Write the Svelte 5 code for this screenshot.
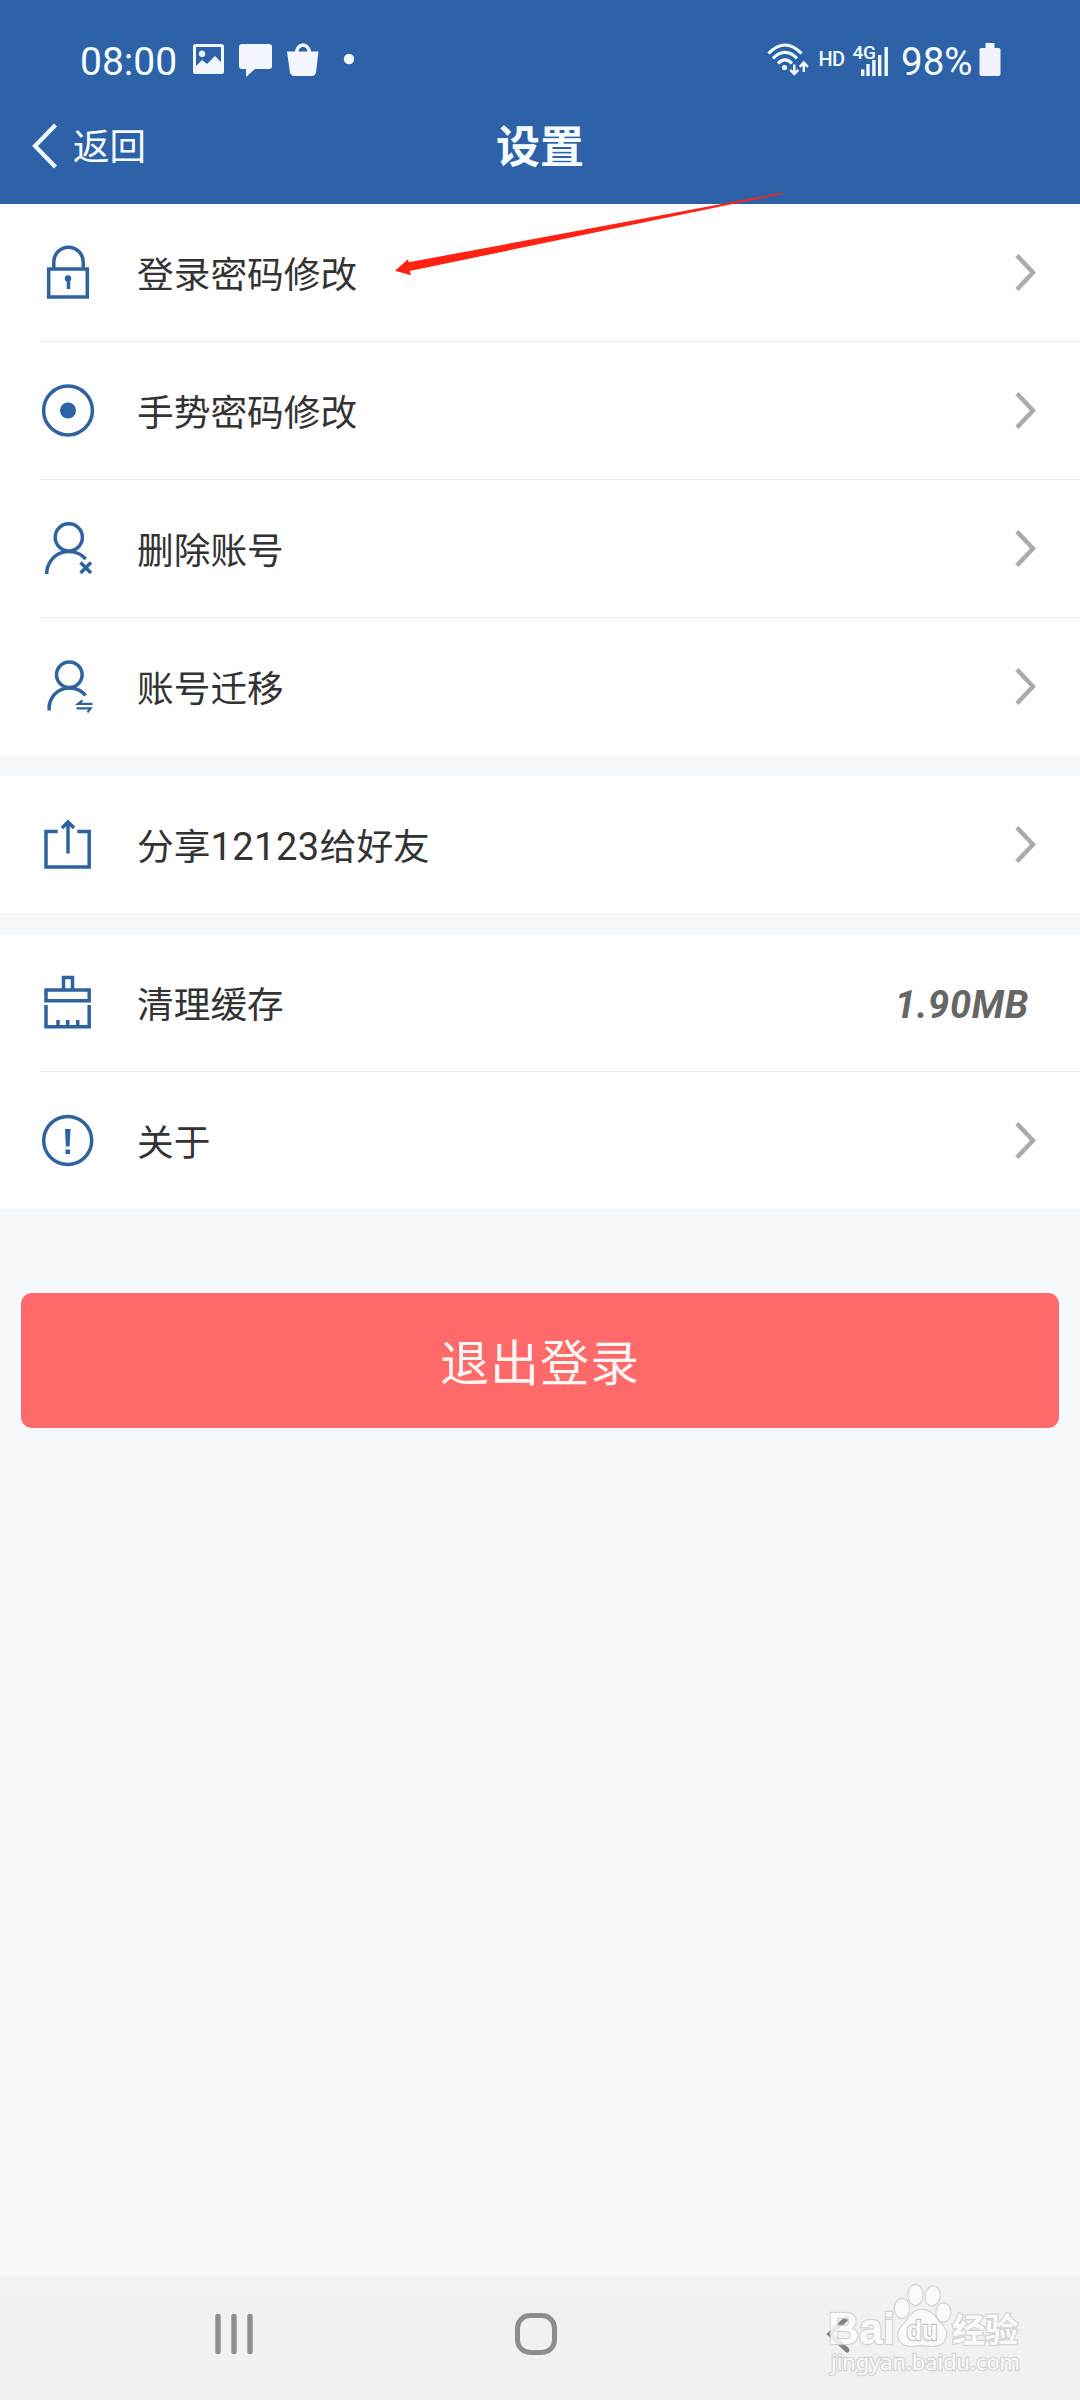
<script lang='ts'>
	type Item = { icon: string, label: string, value?: string }

	const groups: Item[][] = [
		[
			{ icon: 'lock', label: '登录密码修改' },
			{ icon: 'gesture', label: '手势密码修改' },
			{ icon: 'remove', label: '删除账号' },
			{ icon: 'transfer', label: '账号迁移' }
		],
		[
			{ icon: 'share', label: '分享12123给好友' }
		],
		[
			{ icon: 'brush', label: '清理缓存', value: '1.90MB' },
			{ icon: 'about', label: '关于' }
		]
	]

	// digits are set a little wider than the characters around them
	const parts = (label: string) => label.split(/(\d+)/).filter(Boolean)
</script>

<div class='screen'>
	<header>
		<div class='status'>
			<span class='time'>08:00</span>
			<svg class='notifications' width='164' height='40' viewBox='0 0 164 40' fill='#f3f6fc'>
				<path fill-rule='evenodd' d='M2.5 4h26a2.500 2.500 0 0 1 2.500 2.500v25a2.500 2.500 0 0 1-2.500 2.500h-26a2.500 2.500 0 0 1-2.500-2.500v-25A2.500 2.500 0 0 1 2.500 4zM3 7v19l6-6 5 4 8-8 6 6V7zM9 10.500a3.300 3.300 0 1 0 .1 0z' />
				<path d='M49 4h27a3 3 0 0 1 3 3v19a3 3 0 0 1-3 3H62l-9 8v-8h-4a3 3 0 0 1-3-3V7a3 3 0 0 1 3-3z' />
				<path d='M94 11.500h31.500L123 32q-.6 4-4.500 4h-17q-4 0-4.600-4z' />
				<path d='M103.500 13a6.400 8 0 0 1 13 0' fill='none' stroke='#f3f6fc' stroke-width='3.500' />
				<circle cx='156' cy='19' r='5.200' />
			</svg>
			<svg class='network' width='124' height='40' viewBox='0 0 124 40' fill='#f3faff'>
				<g fill='none' stroke='#f3faff' stroke-width='3.200'>
					<path d='M1.500 13.500Q18-3.500 34.500 13.500' />
					<path d='M6 18.300Q18 6.500 30 18.300' />
					<path d='M11 23.300Q18 16.500 25 23.300' />
				</g>
				<circle cx='17.500' cy='27.500' r='2.600' />
				<g fill='none' stroke='#f3faff' stroke-width='2.400'>
					<path d='M27.300 24.500v9M23.300 29.800l4 4.200 4-4.200' />
					<path d='M36.800 32v-9M32.800 26.800l4-4.200 4 4.200' />
				</g>
				<text x='51.500' y='25.500' font-size='20' textLength='26.500'>HD</text>
				<text x='85.500' y='19' font-size='19' textLength='23.500'>4G</text>
				<path d='M94 29.500h3.400V36H94zM99.300 24h3.400v12h-3.400zM105.200 20h3.400v16h-3.400zM111 15h3.400v21H111zM117.500 7h3.400v29h-3.400z' />
			</svg>
			<span class='percent'>98%</span>
			<svg class='battery' width='22' height='40' viewBox='0 0 22 40' fill='#f3f3fc'>
				<path d='M6.500 3h9v5H20q1.500 0 1.500 1.500V34q0 2-2 2h-17q-2 0-2-2V9.500Q.5 8 2 8h4.500z' />
			</svg>
		</div>

		<div class='bar'>
			<button class='back'>
				<svg width='30' height='48' viewBox='0 0 30 48'>
					<path d='M27.500 3L7 24l20.500 21' fill='none' stroke='#f3faff' stroke-width='4.200' />
				</svg>
				<span>返回</span>
			</button>
			<h1>设置</h1>
			<span></span>
		</div>
	</header>

	<main>
		{#each groups as group}
			<section>
				{#each group as item}
					<div class='row'>
						<svg class='icon' width='60' height='61' viewBox='0 0 60 61'>
							{#if item.icon === 'lock'}
								<rect x='10.700' y='27' width='38.600' height='28' />
								<path d='M15.800 27v-7a14.700 14.700 0 0 1 29.400 0v7' />
								<circle class='solid' cx='30' cy='36.500' r='3.200' />
								<path d='M30.500 37v10' />
							{:else if item.icon === 'gesture'}
								<circle cx='30' cy='30.500' r='24.400' />
								<circle class='solid' cx='30' cy='30.500' r='8' />
							{:else if item.icon === 'remove'}
								<circle cx='30.800' cy='19.300' r='13.600' />
								<path d='M8.700 56A22.300 22.300 0 0 1 47.700 41' />
								<path d='M42.500 44.500l10.500 10.500M53 44.500L42.500 55' />
							{:else if item.icon === 'transfer'}
								<circle cx='31.300' cy='18.800' r='12.800' />
								<path d='M11.200 54.500A20.500 20.500 0 0 1 47.500 39.500' />
								<path class='thin' d='M54.500 47.800H40l4.500-3.500M38.500 52.300h14l-3 4' />
							{:else if item.icon === 'share'}
								<path d='M19.700 17.500H8v35.600h43.200V17.500H39.300M30 39.500V8M24 14l6-6 6 6' />
							{:else if item.icon === 'brush'}
								<path d='M25.500 17V5.500h9V17M8 18h43.200v10.800H8zM8 33v21.800h43.200V33' />
								<path d='M20 48v7M29.700 48v7M39.700 48v7' />
							{:else}
								<circle cx='29.700' cy='30.500' r='24' />
								<path class='solid' d='M27 19h5.500l-.9 17.500h-3.700zM27.500 39.500h4.500V44h-4.500z' />
							{/if}
						</svg>
						<span class='label'>{#each parts(item.label) as part}<span class:digits={/\d/.test(part)}>{part}</span>{/each}</span>
						{#if item.value}
							<span class='value'>{item.value}</span>
						{:else}
							<svg class='chevron' width='24' height='41' viewBox='0 0 24 41'>
								<path d='M4 3.500l16 17L4 37.500' fill='none' stroke='#ababab' stroke-width='4.400' />
							</svg>
						{/if}
					</div>
				{/each}
			</section>
		{/each}

		<button class='logout'>退出登录</button>
	</main>

	<nav>
		<svg width='42' height='44' viewBox='0 0 42 44'>
			<path d='M5 4.500v35M21 4.500v35M37 4.500v35' stroke='#8e8e8e' stroke-width='5.400' stroke-linecap='round' />
		</svg>
		<svg class='home' width='44' height='44' viewBox='0 0 44 44'>
			<rect x='3.500' y='3.500' width='37' height='37' rx='12.500' fill='none' stroke='#8e8e8e' stroke-width='5' />
		</svg>
		<svg width='28' height='44' viewBox='0 0 28 44'>
			<path d='M23 6L6 22l17 16' fill='none' stroke='#828282' stroke-width='5' stroke-linecap='round' />
		</svg>
	</nav>

	<!-- hint arrow pointing at the first row -->
	<svg class='pointer' width='390' height='88' viewBox='0 0 390 88'>
		<path d='M0 80.700l13-11.400.6 3L340 11.500 387.500 2.500v1.500L340 13.500 14.600 81l1.400 4.300z' fill='#ff2212' />
	</svg>

	<svg class='watermark' width='204' height='112' viewBox='0 0 204 112'>
		<g class='mark'>
			<text class='brand' x='2' y='64' font-size='44' textLength='67' lengthAdjust='spacingAndGlyphs'>Bai</text>
			<ellipse cx='76' cy='28.500' rx='7' ry='9.500' />
			<ellipse cx='89.500' cy='15' rx='7' ry='10' />
			<ellipse cx='106.500' cy='16' rx='7' ry='9.500' transform='rotate(8 106.500 16)' />
			<ellipse cx='117.500' cy='32.500' rx='7' ry='9' />
			<path d='M96 30c9 0 13 7 18 13 5 5 8 9 5 16-4 9-13 7-23 6-10 1-19 3-23-6-2-7 1-11 6-16 5-6 8-13 17-13z' />
			<text class='brand du' x='80.500' y='60' font-size='28' textLength='31' lengthAdjust='spacingAndGlyphs'>du</text>
			<text class='cn' x='126' y='62' font-size='33' textLength='66'>经验</text>
			<text class='url' x='5' y='90' font-size='22.500' textLength='189' lengthAdjust='spacingAndGlyphs'>jingyan.baidu.com</text>
		</g>
	</svg>
</div>

<style>
	:global(body) {
		margin: 0;
	}

	.screen {
		position: relative;
		display: flex;
		flex-direction: column;
		width: 1080px;
		height: 2400px;
		overflow: hidden;
		background: #f6f9fc;
		font-family: Roboto, 'Noto Sans CJK SC', sans-serif;
		color: #333;
	}

	button {
		padding: 0;
		border: 0;
		background: none;
		font-family: inherit;
	}

	svg {
		display: block;
		flex: none;
	}

	header {
		height: 204px;
		background: #2d62a8;
		color: #f6fcff;
	}

	.status {
		display: flex;
		align-items: center;
		height: 80px;
		padding: 40px 79px 0 80px;
		box-sizing: border-box;
		line-height: 40px;
	}

	.time {
		width: 113px;
		padding-top: 3px;
		font-size: 39px;
	}

	.network {
		margin-left: auto;
		font-weight: 500;
	}

	.percent {
		margin-left: 10px;
		width: 78px;
		padding-top: 3px;
		font-size: 38.500px;
	}

	.bar {
		display: grid;
		grid-template-columns: 1fr auto 1fr;
		align-items: center;
		height: 132px;
		padding: 0 28px;
	}

	.back {
		display: flex;
		align-items: center;
		gap: 15px;
		color: inherit;
		font-size: 36.500px;
		line-height: 48px;
	}

	.back span {
		padding-top: 4px;
	}

	h1 {
		margin: 0;
		padding-top: 4px;
		font-size: 44px;
		line-height: 60px;
		font-weight: 700;
	}

	section {
		margin-bottom: 21px;
		background: #fefefe;
	}

	.row {
		position: relative;
		display: flex;
		align-items: center;
		height: 137px;
		padding: 0 43px 0 38px;
	}

	.row:not(:last-child) {
		padding-bottom: 1px;
	}

	.row:not(:last-child)::after {
		content: '';
		position: absolute;
		left: 40px;
		right: 0;
		bottom: 0;
		height: 1px;
		background: #e9ebec;
	}

	.icon {
		fill: none;
		stroke: #2f639f;
		stroke-width: 3.500;
	}

	.solid {
		fill: #2b61a5;
		stroke: none;
	}

	.thin {
		stroke-width: 2.200;
	}

	.label {
		flex: 1;
		margin-left: 39px;
		padding-top: 6px;
		font-size: 36.700px;
		line-height: 50px;
	}

	.digits {
		font-size: 38px;
		letter-spacing: 0.500px;
	}

	.value {
		margin-right: 8px;
		padding-top: 4px;
		color: #666;
		font-size: 38px;
		font-style: italic;
		font-weight: 700;
		letter-spacing: 0.700px;
	}

	.logout {
		display: block;
		width: 1038px;
		height: 135px;
		margin: 84px 21px 0;
		padding-bottom: 2px;
		border-radius: 11px;
		background: #fe6969;
		color: #fff5f3;
		font-size: 49px;
		letter-spacing: 1px;
	}

	nav {
		display: flex;
		align-items: flex-start;
		justify-content: space-between;
		height: 123px;
		margin-top: auto;
		padding: 35px 228px 0 213px;
		box-sizing: border-box;
		background: linear-gradient(#f0f3f6, #f1f1f2 28px, #f1f1f2 80px, #eff1f4);
	}

	.home {
		margin-right: 8px;
	}

	.pointer {
		position: absolute;
		top: 190px;
		left: 395px;
	}

	.watermark {
		position: absolute;
		top: 2280px;
		left: 826px;
	}

	.mark {
		fill: #fcfcfc;
		stroke: #cfcfcf;
		stroke-width: 2.400;
		paint-order: stroke;
		opacity: 0.850;
	}

	.brand {
		font-family: 'Liberation Sans', sans-serif;
		font-weight: 700;
	}

	.du {
		stroke: #bdbdbd;
	}

	.cn {
		font-weight: 700;
	}

	.url {
		font-family: 'Noto Sans', sans-serif;
	}
</style>
